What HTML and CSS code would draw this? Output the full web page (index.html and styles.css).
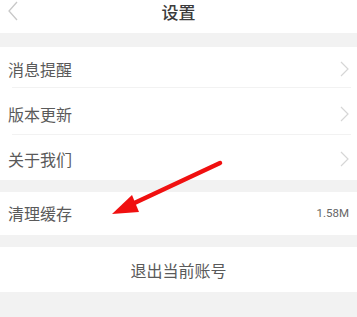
FILE: index.html
```html
<!DOCTYPE html>
<html lang="zh">
<head>
<meta charset="utf-8">
<link rel="stylesheet" href="styles.css">
</head>
<body>
<div class="page">
  <header class="topbar">
    <svg class="back" width="12" height="20" viewBox="0 0 12 20"><path d="M10 1 L2 10 L10 19" fill="none" stroke="#c8c8c8" stroke-width="1.3"/></svg>
    <div class="title">设置</div>
  </header>
  <div class="gap g1"></div>
  <section class="group">
    <div class="row r1"><span class="label">消息提醒</span><svg class="chev" width="9" height="16" viewBox="0 0 9 16"><path d="M1 1 L8 8 L1 15" fill="none" stroke="#d6d6d6" stroke-width="1.2"/></svg></div>
    <div class="row r2"><span class="label">版本更新</span><svg class="chev" width="9" height="16" viewBox="0 0 9 16"><path d="M1 1 L8 8 L1 15" fill="none" stroke="#d6d6d6" stroke-width="1.2"/></svg></div>
    <div class="row r3"><span class="label">关于我们</span><svg class="chev" width="9" height="16" viewBox="0 0 9 16"><path d="M1 1 L8 8 L1 15" fill="none" stroke="#d6d6d6" stroke-width="1.2"/></svg></div>
  </section>
  <div class="gap g2"></div>
  <section class="group">
    <div class="row r4"><span class="label">清理缓存</span><span class="value">1.58M</span></div>
  </section>
  <div class="gap g3"></div>
  <section class="group">
    <div class="logout">退出当前账号</div>
  </section>
  <div class="rest"></div>
  <svg class="arrow" width="357" height="317" viewBox="0 0 357 317">
    <line x1="220" y1="163" x2="128" y2="206" stroke="#f01010" stroke-width="4.5" stroke-linecap="round"/>
    <polygon points="112,214 132,195 139,212" fill="#f01010"/>
  </svg>
</div>
</body>
</html>
```
FILE: styles.css
```css
html, body {
  margin: 0;
  padding: 0;
  background: #f2f2f2;
}
body {
  font-family: "Noto Sans CJK SC", "Noto Sans", sans-serif;
}
.page {
  position: relative;
  width: 357px;
  height: 317px;
  overflow: hidden;
  background: #f2f2f2;
}
.topbar {
  height: 33px;
  background: #fff;
  display: flex;
  align-items: center;
  justify-content: center;
  position: relative;
}
.back {
  position: absolute;
  left: 7px;
  top: 1px;
}
.title {
  font-size: 17px;
  font-weight: 500;
  color: #3c3c3c;
  line-height: 1;
  margin-top: -11px;
}
.gap { background: #f2f2f2; }
.g1 { height: 14px; }
.g2 { height: 12px; }
.g3 { height: 12px; }
.group {
  background: #fff;
}
.row {
  display: flex;
  align-items: center;
  justify-content: space-between;
  padding: 0 8px;
  position: relative;
  box-sizing: border-box;
}
.r1 { height: 41px; padding-top: 2px; }
.r2 { height: 47px; padding-top: 5px; }
.r3 { height: 45px; padding-top: 3px; }
.r4 { height: 43px; padding-bottom: 1px; }
.r1::after, .r2::after {
  content: "";
  position: absolute;
  left: 12px;
  right: 6px;
  bottom: 0;
  height: 1px;
  background: #f2f2f2;
}
.label {
  font-size: 16px;
  color: #5a5a5a;
  line-height: 1;
}
.value {
  font-size: 11.5px;
  color: #666;
  font-family: "Roboto", "Noto Sans", sans-serif;
}
.logout {
  height: 45px;
  display: flex;
  align-items: center;
  justify-content: center;
  font-size: 16px;
  color: #5a5a5a;
}
.rest { height: 40px; background: #f2f2f2; }
.arrow {
  position: absolute;
  left: 0;
  top: 0;
  pointer-events: none;
}
```
